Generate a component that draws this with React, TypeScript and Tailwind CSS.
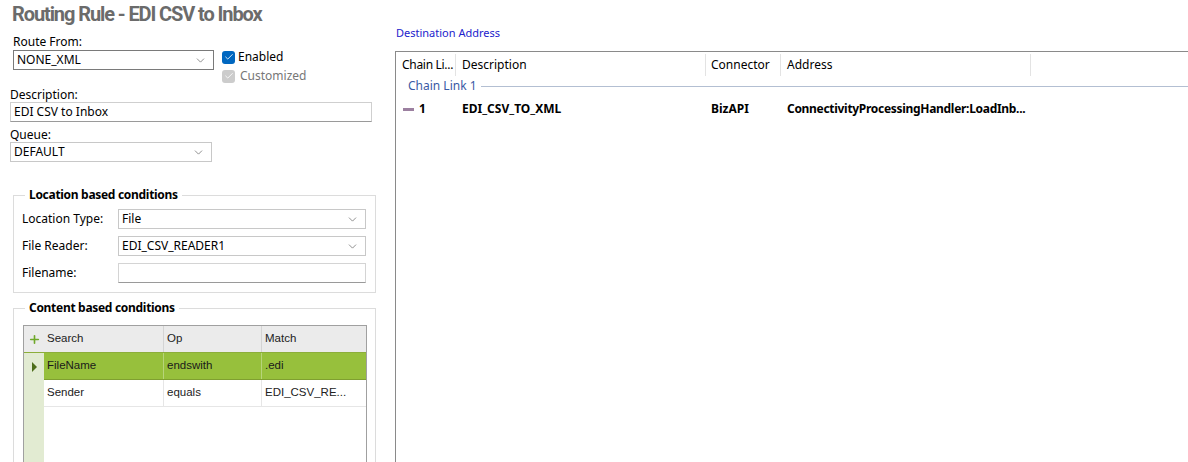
import React from "react";
import { ChevronDown, Check, Plus } from "lucide-react";

const ui = { fontFamily: '"Noto Sans", "Open Sans", sans-serif' };
const grid = { fontFamily: '"Liberation Sans", Arial, sans-serif' };

function Combo({ value, className }: { value: string; className: string }) {
  return (
    <div className={`flex h-[20px] items-center justify-between border bg-white pl-[3px] pr-[6px] text-[12px] text-black ${className}`}>
      <span className="leading-none">{value}</span>
      <ChevronDown size={13} strokeWidth={1.2} className="text-[#555]" />
    </div>
  );
}

function Group({ title, className, children }: { title: string; className: string; children: React.ReactNode }) {
  return (
    <div className={`relative ml-[13px] w-[363px] shrink-0 border border-[#dcdcdc] ${className}`}>
      <span className="absolute left-[11px] top-[-9px] bg-white px-[4px] text-[12px] font-bold leading-[16px] tracking-[-0.3px] text-black">
        {title}
      </span>
      {children}
    </div>
  );
}

export default function App() {
  return (
    <div className="flex h-[462px] w-[1188px] overflow-hidden bg-white text-black" style={ui}>
      {/* left column */}
      <div className="flex w-[395px] shrink-0 flex-col">
        <h1
          className="ml-[12px] mt-[1px] h-[26px] whitespace-nowrap text-[20px] font-bold leading-[26px] tracking-[-1.1px] text-[#6b6b6b]"
          style={{ fontFamily: '"Roboto", sans-serif' }}
        >
          Routing Rule - EDI CSV to Inbox
        </h1>
        <div className="ml-[13px] mt-[8px] text-[12px] leading-[14px]">Route From:</div>
        <div className="ml-[13px] mt-[1px] flex h-[20px] shrink-0 items-start">
          <Combo value="NONE_XML" className="w-[201px] border-[#7a7a7a]" />
          <div className="ml-[8px] flex flex-col text-[12px]">
            <div className="flex h-[14px] items-center gap-[3px]">
              <span className="flex h-[13px] w-[13px] items-center justify-center rounded-[3px] bg-[#0067c0]">
                <Check size={10} strokeWidth={2} className="text-white" />
              </span>
              <span className="leading-none">Enabled</span>
            </div>
            <div className="mt-[5px] flex h-[14px] items-center gap-[5px]">
              <span className="flex h-[13px] w-[13px] items-center justify-center rounded-[3px] bg-[#cccccc]">
                <Check size={10} strokeWidth={2} className="text-white" />
              </span>
              <span className="leading-none text-[#777]">Customized</span>
            </div>
          </div>
        </div>
        <div className="ml-[10px] mt-[18px] text-[12px] leading-[14px]">Description:</div>
        <div className="ml-[10px] flex h-[20px] w-[362px] shrink-0 items-center border border-[#cfcfcf] border-b-[#9a9a9a] pl-[3px] text-[12px]">
          EDI CSV to Inbox
        </div>
        <div className="ml-[10px] mt-[6px] text-[12px] leading-[14px]">Queue:</div>
        <div className="ml-[10px] shrink-0">
          <Combo value="DEFAULT" className="w-[202px] border-[#c8c8c8]" />
        </div>

        <Group title="Location based conditions" className="mt-[33px] h-[98px]">
          <div className="mt-[13px] flex flex-col gap-[7px] pl-[8px] text-[12px]">
            <div className="flex items-center">
              <span className="w-[96px]">Location Type:</span>
              <Combo value="File" className="w-[248px] border-[#c8c8c8]" />
            </div>
            <div className="flex items-center">
              <span className="w-[96px]">File Reader:</span>
              <Combo value="EDI_CSV_READER1" className="w-[248px] border-[#c8c8c8]" />
            </div>
            <div className="flex items-center">
              <span className="w-[96px]">Filename:</span>
              <div className="h-[20px] w-[248px] border border-[#d4d4d4] border-b-[#9a9a9a] bg-white" />
            </div>
          </div>
        </Group>

        <Group title="Content based conditions" className="mt-[15px] h-[200px] border-b-0">
          <div className="ml-[9px] mt-[16px] h-[200px] w-[344px] border border-[#a0a0a0] border-b-0" style={grid}>
            <div className="flex h-[27px] border-b border-[#8cae3a] bg-[#ebebeb] text-[11.5px] text-[#222]">
              <div className="flex w-[20px] items-center justify-center">
                <Plus size={13} strokeWidth={3} className="text-[#6fa82a]" />
              </div>
              <div className="flex w-[120px] items-center border-r border-[#d4d4d4] pl-[3px]">Search</div>
              <div className="flex w-[98px] items-center border-r border-[#d4d4d4] pl-[3px]">Op</div>
              <div className="flex flex-1 items-center pl-[3px]">Match</div>
            </div>
            <div className="flex h-[200px]">
              <div className="flex w-[20px] flex-col bg-[#e2ebd2]">
                <div className="flex h-[27px] items-center justify-center">
                  <span className="h-0 w-0 border-y-[5px] border-l-[5px] border-y-transparent border-l-[#4e6e1a]" />
                </div>
              </div>
              <div className="flex flex-1 flex-col text-[11.5px]">
                <div className="flex h-[27px] border-b border-[#7f9f30] bg-[#97c03c] text-[#1a1a1a]">
                  <div className="flex w-[120px] items-center border-r border-[#b7d47a] pl-[3px]">FileName</div>
                  <div className="flex w-[98px] items-center border-r border-[#b7d47a] pl-[3px]">endswith</div>
                  <div className="flex flex-1 items-center pl-[3px]">.edi</div>
                </div>
                <div className="flex h-[27px] border-b border-[#e6e6e6] bg-white text-[#222]">
                  <div className="flex w-[120px] items-center border-r border-[#e6e6e6] pl-[3px]">Sender</div>
                  <div className="flex w-[98px] items-center border-r border-[#e6e6e6] pl-[3px]">equals</div>
                  <div className="flex flex-1 items-center pl-[3px]">EDI_CSV_RE...</div>
                </div>
              </div>
            </div>
          </div>
        </Group>
      </div>

      {/* right column */}
      <div className="flex flex-1 flex-col">
        <div className="ml-[1px] mt-[26px] h-[14px] text-[11px] leading-[14px] text-[#2222cc]">Destination Address</div>
        <div className="mt-[11px] flex-1 border-l border-t border-[#8a8a8a] text-[12px]">
          <div className="flex h-[26px] items-center whitespace-nowrap">
            <div className="flex h-[22px] w-[60px] items-center overflow-hidden border-r border-[#e3e3e3] pl-[6px] tracking-[-0.3px]">Chain Li...</div>
            <div className="flex h-[22px] w-[250px] items-center border-r border-[#e3e3e3] pl-[6px]">Description</div>
            <div className="flex h-[22px] w-[75px] items-center border-r border-[#e3e3e3] pl-[5px]">Connector</div>
            <div className="flex h-[22px] w-[250px] items-center border-r border-[#e3e3e3] pl-[6px]">Address</div>
          </div>
          <div className="flex h-[16px] items-center pl-[12px]">
            <span className="text-[#3b5aa5]">Chain Link 1</span>
            <span className="ml-[4px] h-px flex-1 bg-[#b3bfd2]" />
          </div>
          <div className="mt-[6px] flex h-[18px] items-center whitespace-nowrap font-bold">
            <div className="flex w-[60px] items-center pl-[7px]">
              <span className="h-[3px] w-[11px] bg-[#9c80a0]" />
              <span className="ml-[5px]">1</span>
            </div>
            <div className="w-[250px] pl-[6px]">EDI_CSV_TO_XML</div>
            <div className="w-[75px] pl-[5px]">BizAPI</div>
            <div className="w-[250px] pl-[6px] tracking-[-0.3px]">ConnectivityProcessingHandler:LoadInb...</div>
          </div>
        </div>
      </div>
    </div>
  );
}
